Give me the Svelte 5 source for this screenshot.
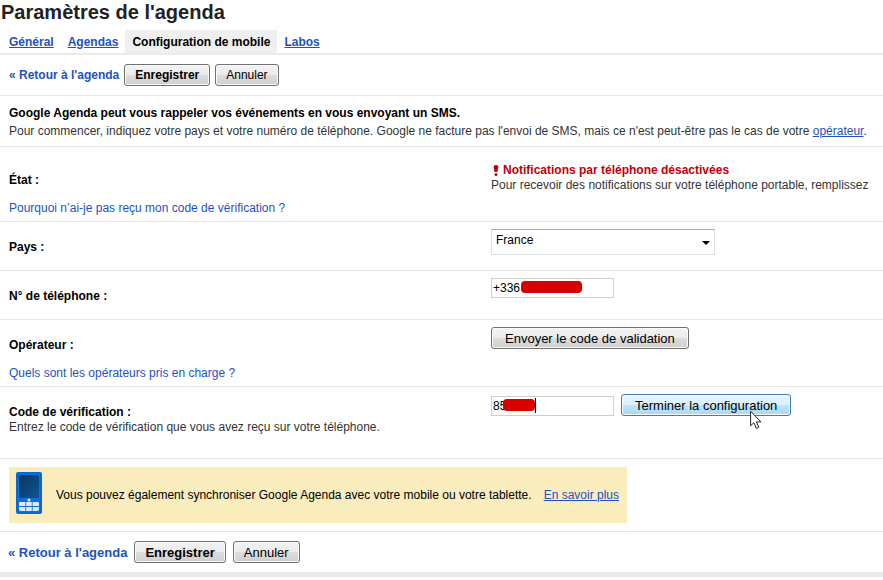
<script>
  const tabs = ['Général', 'Agendas', 'Configuration de mobile', 'Labos'];
  let activeTab = 'Configuration de mobile';

  let country = 'France';
  let phone = '+336';
  let code = '85';
</script>

<main class="settings">
  <h1>Paramètres de l'agenda</h1>

  <nav class="tabs">
    {#each tabs as tab}
      <a href="#tab" class="tab" class:active={tab === activeTab} on:click={() => (activeTab = tab)}>{tab}</a>
    {/each}
  </nav>

  <div class="toolbar">
    <a href="#back" class="back">« Retour à l'agenda</a>
    <button class="btn save">Enregistrer</button>
    <button class="btn">Annuler</button>
  </div>

  <section class="intro">
    <strong>Google Agenda peut vous rappeler vos événements en vous envoyant un SMS.</strong>
    <p>
      Pour commencer, indiquez votre pays et votre numéro de téléphone. Google ne facture pas l'envoi de SMS, mais ce
      n'est peut-être pas le cas de votre <a href="#carrier">opérateur</a>.
    </p>
  </section>

  <div class="row status-row">
    <div class="info">
      <span class="label">État :</span>
      <a class="help" href="#why">Pourquoi n’ai-je pas reçu mon code de vérification ?</a>
    </div>
    <div class="status">
      <strong>
        <svg width="6" height="11" viewBox="0 0 6 11" aria-hidden="true">
          <path d="M3 0C1.2 0 .5 1 .7 2.6L1.6 7h2.8l.9-4.4C5.5 1 4.8 0 3 0z" fill="#c00008" />
          <circle cx="3" cy="9.4" r="1.5" fill="#c00008" />
        </svg>
        Notifications par téléphone désactivées
      </strong>
      <p>Pour recevoir des notifications sur votre téléphone portable, remplissez</p>
    </div>
  </div>

  <div class="row">
    <div class="info">
      <label class="label" for="country">Pays :</label>
    </div>
    <div class="field">
      <div class="select">
        <select id="country" bind:value={country}>
          <option>France</option>
        </select>
        <svg class="arrow" width="8" height="4" viewBox="0 0 8 4" aria-hidden="true">
          <path d="M0 0h8L4 4z" fill="#000" />
        </svg>
      </div>
    </div>
  </div>

  <div class="row">
    <div class="info">
      <label class="label" for="phone">N° de téléphone :</label>
    </div>
    <div class="field">
      <div class="text">
        <input id="phone" type="text" bind:value={phone} />
        <span class="mask phone-mask"></span>
      </div>
    </div>
  </div>

  <div class="row">
    <div class="info">
      <span class="label">Opérateur :</span>
      <a class="help" href="#carriers">Quels sont les opérateurs pris en charge ?</a>
    </div>
    <div class="field">
      <button class="btn large">Envoyer le code de validation</button>
    </div>
  </div>

  <div class="row">
    <div class="info">
      <label class="label with-note" for="code">Code de vérification :</label>
      <p class="note">Entrez le code de vérification que vous avez reçu sur votre téléphone.</p>
    </div>
    <div class="field">
      <div class="text">
        <input id="code" type="text" bind:value={code} />
        <span class="mask code-mask"></span>
        <span class="caret"></span>
      </div>
      <button class="btn large hover">
        Terminer la configuration
        <svg class="pointer" width="12" height="20" viewBox="0 0 12 20" aria-hidden="true">
          <path
            d="M.6 1.2v14.6l3.3-3.1 2.4 5.7 2.5-1.1-2.4-5.4h4.5z"
            fill="#fff"
            stroke="#222"
            stroke-width="1"
          />
        </svg>
      </button>
    </div>
  </div>

  <section class="promo">
    <div class="promo-box">
      <svg width="26" height="42" viewBox="0 0 26 42" aria-hidden="true">
        <defs>
          <linearGradient id="screen" x1="0" y1="0" x2="1" y2="1">
            <stop offset="0" stop-color="#08365f" />
            <stop offset="1" stop-color="#0f5595" />
          </linearGradient>
        </defs>
        <rect width="26" height="42" rx="2" fill="#0b70d8" />
        <rect x="1" y="1" width="24" height="40" rx="2" fill="none" stroke="#0861bd" />
        <rect x="3" y="3" width="20" height="23" rx="2" fill="url(#screen)" />
        <circle cx="13" cy="28" r="1.5" fill="#e4edf2" />
        <path d="M3 31q0-1 1-1h5.400v4H3zM10.200 30h5.600v4h-5.600zM16.600 30H22q1 0 1 1v3h-6.400z" fill="#e3e8e6" />
        <path d="M3 35h6.400v4H5q-2 0-2-2zM10.200 35h5.600v4h-5.600zM16.600 35H23v2q0 2-2 2h-4.400z" fill="#e3e8e6" />
      </svg>
      <span>Vous pouvez également synchroniser Google Agenda avec votre mobile ou votre tablette.</span>
      <a href="#more">En savoir plus</a>
    </div>
  </section>

  <div class="toolbar bottom">
    <a href="#back" class="back">« Retour à l'agenda</a>
    <button class="btn save">Enregistrer</button>
    <button class="btn">Annuler</button>
  </div>
</main>

<style>
  :global(body) {
    margin: 0;
    background: #fff;
  }

  .settings {
    overflow: hidden;
    font: 12px/15px 'Liberation Sans', Arial, sans-serif;
    color: #000;
    border-bottom: 5px solid #ebebeb;
  }

  h1 {
    margin: 0;
    padding: 0 1px 6px;
    font-size: 20px;
    line-height: 24px;
    color: #222;
  }

  p {
    margin: 0;
    color: #333;
  }

  a {
    color: #1f52bd;
  }

  .tabs {
    display: flex;
    padding-left: 2px;
    border-bottom: 2px solid #ebebeb;
  }

  .tab {
    padding: 2px 7px 0;
    line-height: 21px;
    font-weight: bold;
  }

  .tab.active {
    background: #efefef;
    color: #000;
    text-decoration: none;
  }

  .toolbar {
    display: flex;
    align-items: center;
    gap: 5px;
    padding: 9px;
    border-bottom: 1px solid #e6e6e6;
  }

  .back {
    font-weight: bold;
    text-decoration: none;
  }

  .btn {
    position: relative;
    height: 22px;
    padding: 0 10px;
    border: 1px solid #707070;
    border-radius: 3px;
    background: linear-gradient(#f3f3f3, #ebebeb 50%, #dddddd 50%, #cfcfcf);
    box-shadow: inset 0 0 0 1px #fafafa;
    color: #000;
    font: inherit;
    white-space: nowrap;
  }

  .btn.save {
    font-weight: bold;
  }

  .btn.large {
    padding: 0 13px;
    font-size: 13px;
  }

  .btn.hover {
    border-color: #3c7fb1;
    background: linear-gradient(#eaf6fd, #d9f0fc 50%, #bee6fd 50%, #a7d9f5);
  }

  .bottom {
    gap: 7px;
    padding: 9px 8px;
    border-bottom: 0;
    font-size: 13px;
  }

  .intro {
    padding: 8px 0 6px 9px;
    border-bottom: 1px solid #e6e6e6;
    line-height: 18px;
    white-space: nowrap;
  }

  .row {
    display: grid;
    grid-template-columns: 482px 1fr;
    padding: 7px 0 6px 9px;
    border-bottom: 1px solid #e6e6e6;
  }

  .status-row {
    padding-top: 15px;
  }

  .label {
    display: block;
    padding: 11px 0 9px;
    font-weight: bold;
  }

  .label.with-note {
    padding-bottom: 0;
  }

  .note {
    padding-bottom: 17px;
  }

  .help {
    display: block;
    margin-top: 4px;
    margin-bottom: -1px;
    text-decoration: none;
  }

  .status {
    padding-top: 1px;
    white-space: nowrap;
  }

  .status strong {
    display: flex;
    align-items: center;
    gap: 4px;
    padding-left: 2px;
    color: #c00008;
  }

  .field {
    display: flex;
    align-items: flex-end;
    align-self: start;
    gap: 7px;
  }

  .select {
    position: relative;
  }

  select {
    display: block;
    width: 224px;
    height: 26px;
    padding: 0 4px 4px;
    border: 1px solid #dcdfe3;
    border-top-color: #a9a9a9;
    border-radius: 0;
    appearance: none;
    background: #fff;
    color: #000;
    font: inherit;
  }

  .arrow {
    position: absolute;
    right: 5px;
    top: 12px;
  }

  .text {
    position: relative;
  }

  input {
    display: block;
    box-sizing: border-box;
    width: 123px;
    height: 20px;
    padding: 0 1px;
    border: 1px solid #cfcfcf;
    background: #fff;
    color: #000;
    font: inherit;
  }

  .mask {
    position: absolute;
    top: 3px;
    height: 12px;
    border-radius: 4px;
    background: #d90000;
  }

  .phone-mask {
    left: 30px;
    width: 61px;
  }

  .code-mask {
    left: 12px;
    width: 32px;
  }

  .caret {
    position: absolute;
    left: 44px;
    top: 2px;
    width: 1px;
    height: 15px;
    background: #000;
  }

  .pointer {
    position: absolute;
    left: 128px;
    top: 15px;
  }

  .promo {
    padding: 8px 9px;
    border-bottom: 1px solid #e6e6e6;
  }

  .promo-box {
    display: flex;
    align-items: center;
    width: fit-content;
    padding: 0 8px 0 7px;
    background: #f9ecbd;
    white-space: nowrap;
  }

  .promo-box svg {
    margin: 5px 14px 9px 0;
  }

  .promo-box a {
    margin-left: 12px;
  }
</style>
